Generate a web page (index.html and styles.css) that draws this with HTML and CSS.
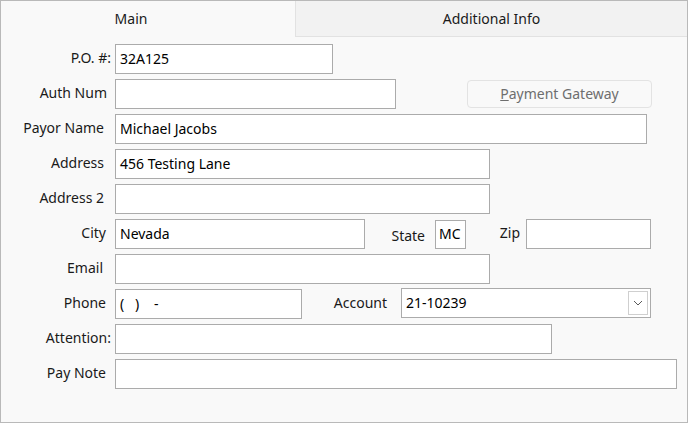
FILE: index.html
```html
<!DOCTYPE html>
<html>
<head>
<meta charset="utf-8">
<link rel="stylesheet" href="styles.css">
</head>
<body>
<div class="window">
  <div class="tabs">
    <div class="tab tab-main">Main</div>
    <div class="tab tab-other">Additional Info</div>
  </div>
  <div class="form">
    <div class="row">
      <label class="lbl lbl-colon">P.O. #:</label>
      <div class="box w-po">32A125</div>
    </div>
    <div class="row">
      <label class="lbl lbl-auth">Auth Num</label>
      <div class="box w-auth"></div>
      <div class="btn"><span class="ul">P</span>ayment Gateway</div>
    </div>
    <div class="row">
      <label class="lbl">Payor Name</label>
      <div class="box w-payor">Michael Jacobs</div>
    </div>
    <div class="row">
      <label class="lbl">Address</label>
      <div class="box w-addr">456 Testing Lane</div>
    </div>
    <div class="row">
      <label class="lbl">Address 2</label>
      <div class="box w-addr"></div>
    </div>
    <div class="row">
      <label class="lbl lbl-city">City</label>
      <div class="box w-city">Nevada</div>
      <label class="lbl-in w-state-l">State</label>
      <div class="box box-state">MC</div>
      <label class="lbl-in w-zip-l">Zip</label>
      <div class="box w-zip"></div>
    </div>
    <div class="row">
      <label class="lbl lbl-email">Email</label>
      <div class="box w-addr"></div>
    </div>
    <div class="row">
      <label class="lbl lbl-city">Phone</label>
      <div class="box w-phone">(&nbsp;&nbsp;&nbsp;)&nbsp;&nbsp;&nbsp;&nbsp;-</div>
      <label class="lbl-in w-acct-l">Account</label>
      <div class="box combo">
        <span>21-10239</span>
        <span class="drop"><svg width="10" height="6" viewBox="0 0 10 6"><path d="M1 1 L5 5 L9 1" fill="none" stroke="#5a5a5a" stroke-width="1"/></svg></span>
      </div>
    </div>
    <div class="row">
      <label class="lbl lbl-colon">Attention:</label>
      <div class="box w-attn"></div>
    </div>
    <div class="row">
      <label class="lbl lbl-city">Pay Note</label>
      <div class="box w-note"></div>
    </div>
  </div>
</div>
</body>
</html>
```
FILE: styles.css
```css
html, body {
  margin: 0;
  padding: 0;
  background: #f9f9f9;
}
.window {
  width: 688px;
  height: 423px;
  box-sizing: border-box;
  border: 1px solid #b9b9b9;
  background: #f9f9f9;
  font-family: "Noto Sans", "Open Sans", sans-serif;
  font-size: 14px;
  color: #1a1a1a;
}
.tabs {
  display: flex;
  height: 36px;
}
.tab {
  display: flex;
  align-items: center;
  justify-content: center;
  box-sizing: border-box;
  height: 36px;
  padding-bottom: 2px;
}
.tab-main {
  width: 294px;
  background: #f9f9f9;
  padding-right: 34px;
}
.tab-other {
  flex: 1;
  background: #f2f2f2;
  border-left: 1px solid #e2e2e2;
  border-bottom: 1px solid #e2e2e2;
  padding-bottom: 1px;
}
.form {
  padding-top: 7px;
  display: flex;
  flex-direction: column;
  gap: 5px;
}
.row {
  display: flex;
  align-items: center;
  height: 30px;
}
.lbl {
  width: 114px;
  box-sizing: border-box;
  text-align: right;
  padding-right: 11px;
  padding-bottom: 3px;
  flex: none;
}
.lbl-colon { padding-right: 4px; }
.lbl-auth { padding-right: 8px; }
.lbl-city { padding-right: 9px; }
.lbl-email { padding-right: 12px; }
.lbl-in {
  box-sizing: border-box;
  text-align: right;
  flex: none;
  padding-bottom: 3px;
}
.box {
  box-sizing: border-box;
  height: 30px;
  border: 1px solid #ababab;
  background: #ffffff;
  padding-left: 4px;
  padding-bottom: 2px;
  display: flex;
  align-items: center;
  color: #000;
  flex: none;
  white-space: nowrap;
  overflow: hidden;
}
.w-po { width: 218px; }
.w-auth { width: 281px; }
.w-payor { width: 532px; }
.w-addr { width: 375px; }
.w-city { width: 250px; }
.w-state-l { width: 70px; padding-right: 10px; padding-top: 2px; padding-bottom: 0; }
.box-state { width: 31px; height: 29px; padding-left: 3px; }
.w-zip-l { width: 60px; padding-right: 6px; }
.w-zip { width: 125px; }
.w-phone { width: 187px; }
.w-acct-l { width: 99px; padding-right: 14px; }
.combo {
  width: 250px;
  justify-content: space-between;
  padding-right: 2px;
  padding-bottom: 0;
  margin-top: -2px;
}
.combo > span:first-child { padding-bottom: 2px; }
.drop {
  width: 20px;
  height: 24px;
  box-sizing: border-box;
  border: 1px solid #cfcfcf;
  display: flex;
  align-items: center;
  justify-content: center;
}
.w-attn { width: 437px; }
.w-note { width: 562px; }
.btn {
  margin-left: 71px;
  width: 185px;
  height: 28px;
  box-sizing: border-box;
  border: 1px solid #e3e3e3;
  border-radius: 4px;
  background: #f9f9f9;
  color: #6e6e6e;
  display: flex;
  align-items: center;
  justify-content: center;
  padding-bottom: 2px;
  flex: none;
}
.ul { text-decoration: underline; }
```
